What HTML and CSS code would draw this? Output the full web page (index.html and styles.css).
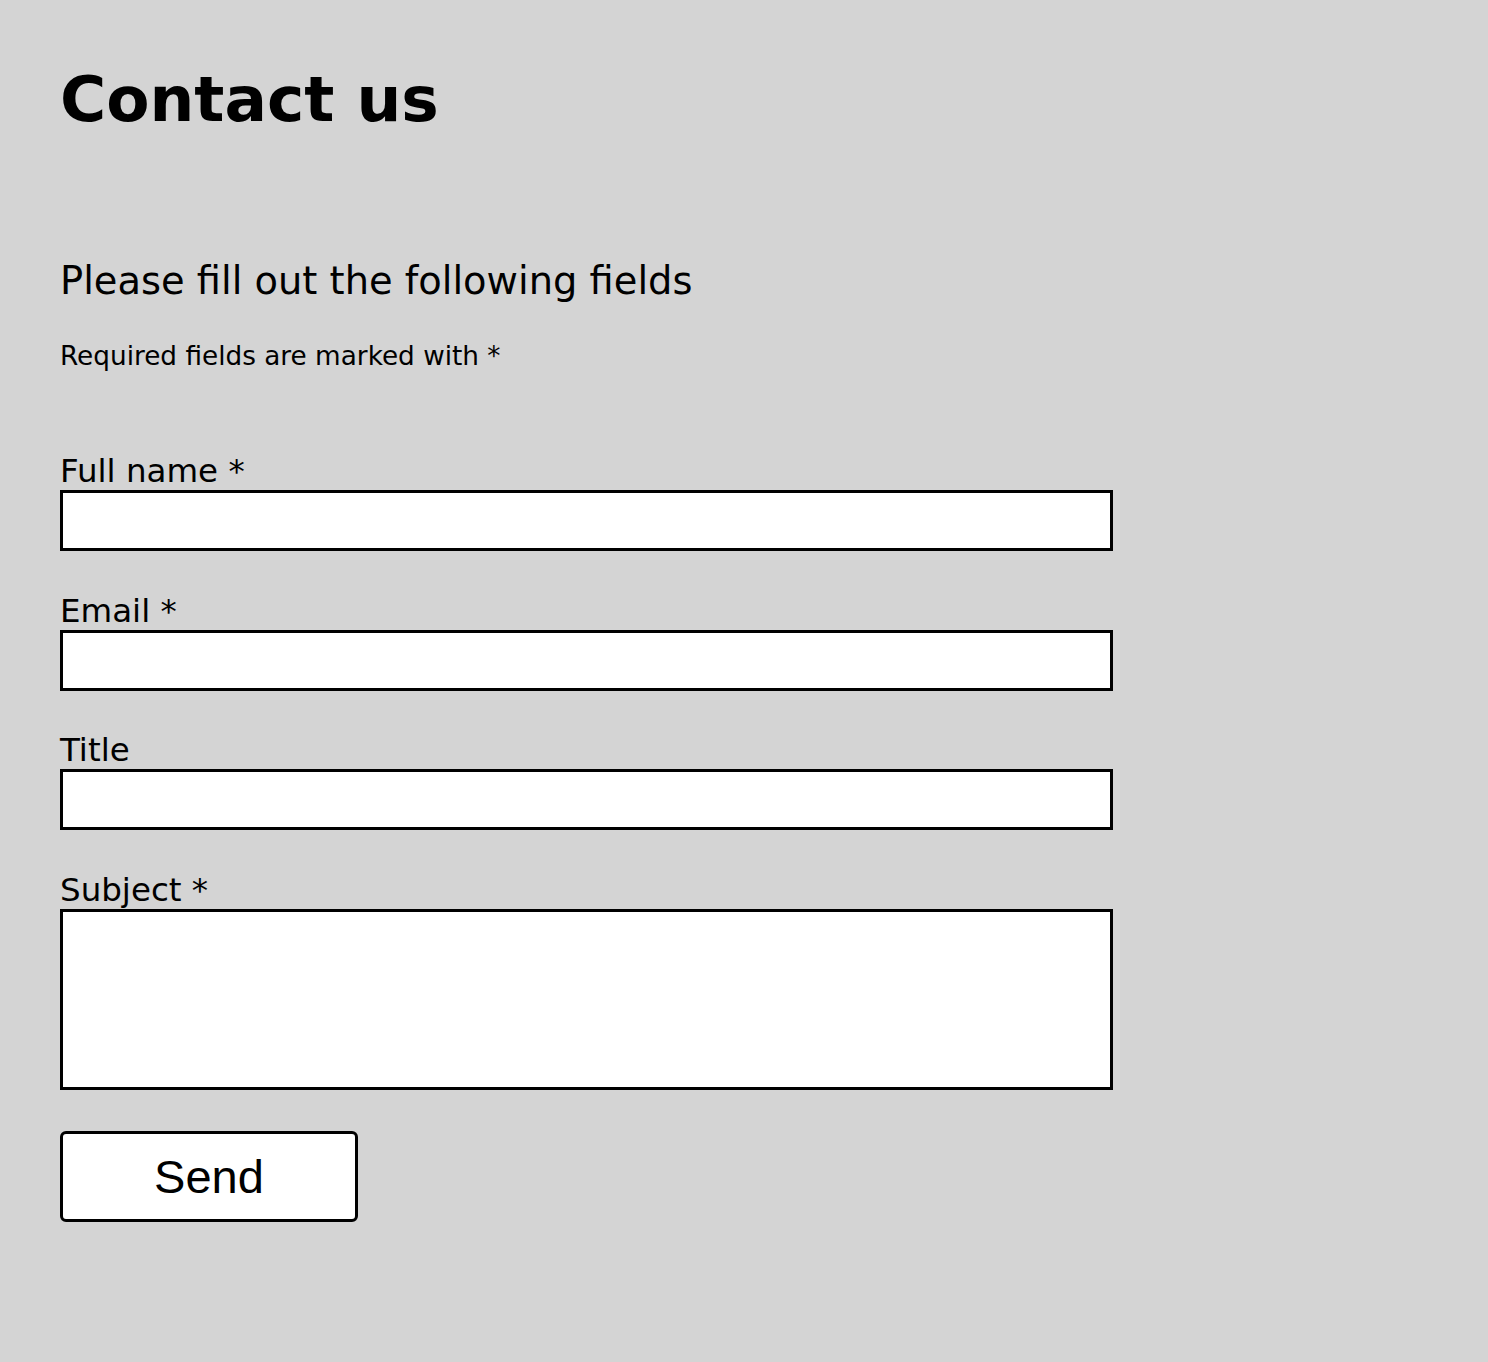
FILE: index.html
```html
<!DOCTYPE html>
<html lang="en">
<head>
<meta charset="utf-8">
<title>Contact us</title>
<link rel="stylesheet" href="styles.css">
</head>
<body>
<main class="page">
  <h1 class="title">Contact us</h1>
  <h2 class="subtitle">Please fill out the following fields</h2>
  <p class="note">Required fields are marked with *</p>
  <form class="form">
    <div class="field">
      <label class="label" for="name">Full name *</label>
      <input class="input" id="name" type="text">
    </div>
    <div class="field">
      <label class="label" for="email">Email *</label>
      <input class="input" id="email" type="email">
    </div>
    <div class="field">
      <label class="label" for="title">Title</label>
      <input class="input" id="title" type="text">
    </div>
    <div class="field">
      <label class="label" for="subject">Subject *</label>
      <textarea class="input textarea" id="subject"></textarea>
    </div>
    <button class="send" type="button">Send</button>
  </form>
</main>
</body>
</html>
```

FILE: styles.css
```css
html, body {
  margin: 0;
  padding: 0;
  background: #d4d4d4;
}

body {
  font-family: "DejaVu Sans", Verdana, sans-serif;
  color: #000;
}

.page {
  padding: 63px 60px 100px;
  display: flex;
  flex-direction: column;
  align-items: flex-start;
}

.title {
  margin: 0;
  font-size: 63px;
  font-weight: bold;
  line-height: 74px;
}

.subtitle {
  margin: 121px 0 0;
  font-size: 38.4px;
  font-weight: normal;
  line-height: 45px;
}

.note {
  margin: 38px 0 0;
  font-size: 26.3px;
  line-height: 31px;
}

.form {
  margin-top: 81px;
  display: flex;
  flex-direction: column;
  gap: 41.5px;
  align-items: flex-start;
}

.field {
  display: flex;
  flex-direction: column;
}

.label {
  font-size: 32.5px;
  line-height: 37px;
  height: 37px;
}

.input {
  box-sizing: border-box;
  width: 1053px;
  height: 61px;
  margin: 0;
  border: 3px solid #000;
  border-radius: 0;
  background: #fff;
  padding: 0 10px;
  font-family: "DejaVu Sans", sans-serif;
  font-size: 24px;
  outline: none;
  display: block;
}

.textarea {
  height: 181px;
  resize: none;
}

.send {
  box-sizing: border-box;
  width: 298px;
  height: 91px;
  margin: 0;
  border: 3px solid #000;
  border-radius: 6px;
  background: #fff;
  font-family: "Liberation Sans", Arial, sans-serif;
  font-size: 47px;
  color: #000;
  padding: 0;
}
```
